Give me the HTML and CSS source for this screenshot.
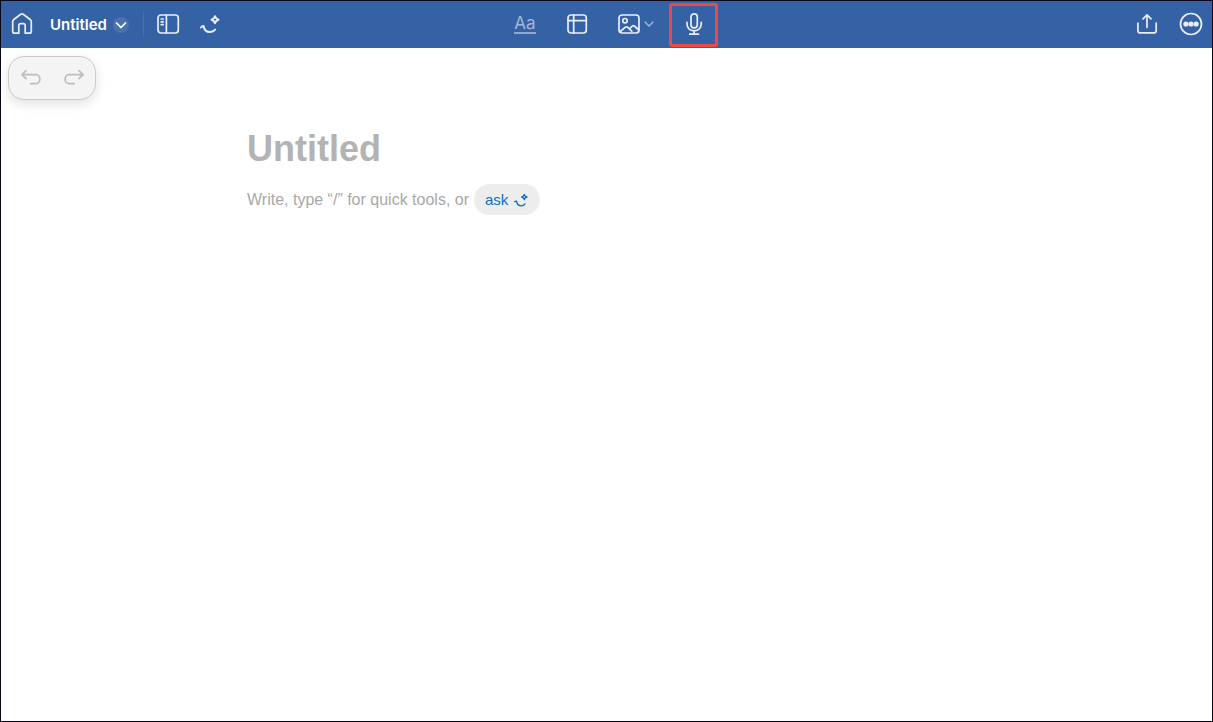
FILE: index.html
```
<!DOCTYPE html>
<html lang="en">
<head>
  <meta charset="UTF-8" />
  <meta name="viewport" content="width=device-width, initial-scale=1.0" />
  <title>Untitled</title>
  <link rel="stylesheet" href="styles.css">
</head>
<body>
  <header class="toolbar">
    <div class="group start">
      <button class="tool" aria-label="Home">
        <svg class="icon" viewBox="0 0 24 24"><path d="M8.8 21.2H4.7a2 2 0 0 1-2-2V9.4c0-.7.3-1.2.8-1.6L10.7 2.3a2 2 0 0 1 2.5 0l7.3 5.5c.5.4.8 1 .8 1.6v9.8a2 2 0 0 1-2 2h-4.1V13.8c0-1.3-.8-2.2-2-2.2h-2.4c-1.2 0-2 .9-2 2.2z"/></svg>
      </button>
      <button class="doc-name">Untitled
        <span class="bubble"><svg viewBox="0 0 16 16"><path d="M3.5 6l4.5 4.5L12.5 6"/></svg></span>
      </button>
      <span class="divider"></span>
      <button class="tool" aria-label="Sidebar">
        <svg class="icon" viewBox="0 0 24 24"><rect x="2" y="3" width="20.3" height="18" rx="3"/><path d="M10.4 3v18M5.2 7h2M5.2 9.8h2M5.2 12.6h2"/></svg>
      </button>
      <button class="tool" aria-label="Assistant">
        <svg class="icon" viewBox="0 0 24 24"><path class="bold" d="M17 4.2c.6 2.1 1.3 2.9 3.5 3.5-2.2.6-2.9 1.4-3.5 3.5-.6-2.1-1.3-2.9-3.5-3.5 2.2-.6 2.9-1.4 3.5-3.5zM2.9 15.5c.7-.9 1.5-1.6 2.6-1.6M5.5 14c.6 3.3 2.6 6 6.1 6 2.4 0 4.3-.8 5.6-2.5"/></svg>
      </button>
    </div>

    <div class="group center">
      <button class="tool muted" aria-label="Text style"><span class="text-style">Aa</span></button>
      <button class="tool" aria-label="Table">
        <svg class="icon" viewBox="0 0 24 24"><rect x="3" y="3" width="18.3" height="18" rx="3"/><path d="M8.7 3v18M3 8.7h18.3"/></svg>
      </button>
      <button class="tool image" aria-label="Image">
        <svg class="icon" viewBox="0 0 24 24"><rect x="2" y="3" width="20" height="18" rx="3"/><circle cx="8" cy="8.7" r="2.2"/><path d="M2.6 20l5.8-4.8c.7-.6 1.3-.6 2 0l4.4 3.9M12.3 16.9l3.1-2.9c.7-.6 1.3-.6 2 0l4.4 4"/></svg>
        <svg class="caret" viewBox="0 0 10 10"><path d="M1 3l4 4 4-4"/></svg>
      </button>
      <button class="tool record" aria-label="Record audio">
        <svg class="icon" viewBox="0 0 24 24"><rect x="9" y="1.8" width="6.3" height="14" rx="3.15"/><path d="M5 10.3v1.5c0 4.3 2.8 7 7.1 7s7.1-2.7 7.1-7v-1.5M12.1 18.8v3.3M7.7 22.2h8.8"/></svg>
      </button>
    </div>

    <div class="group end">
      <button class="tool" aria-label="Share">
        <svg class="icon" viewBox="0 0 24 24"><path d="M2.9 11v7.4a2.5 2.5 0 0 0 2.5 2.5h13.3a2.5 2.5 0 0 0 2.5-2.5V11M12 15.3V3.1M8 6.9l4-4 4 4"/></svg>
      </button>
      <button class="tool" aria-label="More">
        <svg class="icon" viewBox="0 0 24 24"><circle cx="12" cy="12" r="10.5"/><g class="dots"><circle cx="6.9" cy="12" r="2.6"/><circle cx="12" cy="12" r="2.6"/><circle cx="17.1" cy="12" r="2.6"/></g></svg>
      </button>
    </div>
  </header>

  <main class="canvas">
    <div class="history">
      <button aria-label="Undo"><svg class="icon" viewBox="0 0 24 24"><path d="M8 4.7l-4 4 4 4M4 8.7h14a3.8 3.8 0 0 1 3.8 4.2v.9a3.8 3.8 0 0 1-3.8 3.8h-5.3"/></svg></button>
      <button aria-label="Redo"><svg class="icon" viewBox="0 0 24 24"><path d="M17 4.7l4 4-4 4M21 8.7H7a3.8 3.8 0 0 0-3.8 4.2v.9a3.8 3.8 0 0 0 3.8 3.8h5.3"/></svg></button>
    </div>
    <article class="page">
      <input class="page-title" type="text" placeholder="Untitled" aria-label="Title">
      <p class="hint">Write, type “/” for quick tools, or
        <button class="ask">ask
          <svg viewBox="0 0 24 24"><path d="M17 3.5c.6 2.5 1.5 3.4 4 4-2.5.6-3.4 1.5-4 4-.6-2.5-1.5-3.4-4-4 2.5-.6 3.4-1.5 4-4zM2.5 14.5c.9-.6 1.5-.9 2.8-.8M5.3 13.7c.6 4 3.3 7 7.1 7 2.4 0 4.2-.9 5.6-2.9"/></svg>
        </button>
      </p>
    </article>
  </main>
</body>
</html>
```

FILE: styles.css
```
* {
  box-sizing: border-box;
}
body {
  margin: 0;
  min-height: 100vh;
  border: 1px solid #0b0718;
  background: #fff;
  font-family: "Liberation Sans", Arial, sans-serif;
}
button {
  border: 0;
  padding: 0;
  background: none;
  color: inherit;
  font: inherit;
  cursor: pointer;
}
svg {
  display: block;
  flex: none;
  fill: none;
  stroke: currentColor;
  stroke-linecap: round;
  stroke-linejoin: round;
}
.icon {
  width: 24px;
  height: 24px;
  stroke-width: 1.7;
}
.bold {
  stroke-width: 2;
}

/* toolbar */
.toolbar {
  display: grid;
  grid-template-columns: 1fr auto 1fr;
  padding: 2px 0 1px;
  background: #3562a4;
  color: #e9eef6;
}
.group {
  display: flex;
  align-items: center;
}
.center {
  gap: 8px;
  padding-left: 8px;
}
.end {
  gap: 2px;
  justify-content: flex-end;
}
.tool {
  display: flex;
  align-items: center;
  justify-content: center;
  width: 44px;
  height: 44px;
  padding-bottom: 2px;
}
.start .tool,
.end .tool {
  width: 42px;
}
.doc-name {
  display: flex;
  align-items: center;
  gap: 6px;
  margin-left: 7px;
  color: #fff;
  font: 600 15px/20px Inter, sans-serif;
}
.bubble {
  border-radius: 50%;
  background: #4a73ae;
}
.bubble svg {
  width: 16px;
  height: 16px;
  stroke-width: 1.7;
}
.divider {
  width: 1px;
  height: 24px;
  margin: 0 3px 2px 14px;
  background: #4770ac;
}
.muted {
  color: #a3b8d7;
}
.text-style {
  border-bottom: 2px solid #8ea8cf;
  font: 17px/18px Inter, sans-serif;
}
.image {
  gap: 3px;
  width: 54px;
  padding-left: 3px;
}
.caret {
  width: 10px;
  height: 10px;
  stroke-width: 1.4;
  color: #a3b8d7;
}
.record {
  width: 49px;
  border: 3px solid #ee4a41;
  border-radius: 3px;
}
.dots {
  fill: currentColor;
  stroke: none;
}

/* document */
.canvas {
  position: relative;
  padding: 79px 24px 40px;
}
.history {
  position: absolute;
  top: 8px;
  left: 7px;
  display: flex;
  gap: 2px;
  border: 1px solid #ccc;
  border-radius: 16px;
  background: #f4f4f4;
  box-shadow: 0 4px 12px rgba(0, 0, 0, 0.12);
  color: #bdbdbd;
}
.history button {
  display: flex;
  align-items: center;
  justify-content: center;
  width: 42px;
  height: 42px;
}
.page {
  max-width: 719px;
  margin: 0 auto;
}
.page-title {
  display: block;
  width: 100%;
  height: 44px;
  border: 0;
  padding: 0;
  outline: 0;
  background: none;
  color: #222;
  font: bold 36px/44px "Liberation Sans", Arial, sans-serif;
}
.page-title::placeholder {
  color: #b3b3b3;
  opacity: 1;
}
.hint {
  display: flex;
  align-items: center;
  gap: 5px;
  margin: 13px 0 0;
  color: #a8a8a8;
  font-size: 16px;
}
.ask {
  display: flex;
  align-items: center;
  gap: 5px;
  height: 31px;
  padding: 0 11px;
  border-radius: 16px;
  background: #ededed;
  color: #0a6fc8;
  font-size: 15px;
}
.ask svg {
  width: 16px;
  height: 16px;
  stroke-width: 2;
}
```
